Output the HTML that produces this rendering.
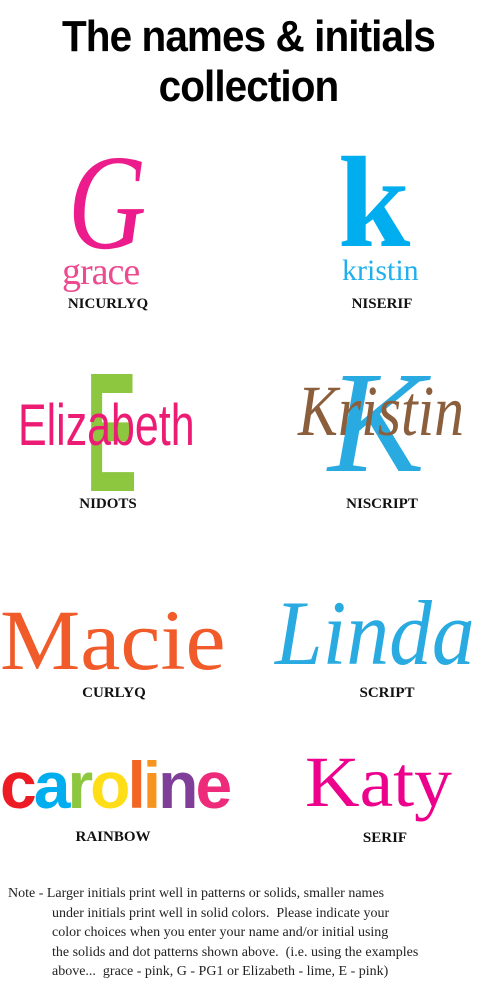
<!DOCTYPE html>
<html><head><meta charset="utf-8"><style>
body{margin:0;width:497px;height:989px;background:#fff;position:relative;overflow:hidden;font-family:"Liberation Serif",serif}
.a{position:absolute;white-space:nowrap;line-height:1}
.lbl{position:absolute;font:bold 15px "Liberation Serif",serif;color:#111;transform:translateX(-50%);white-space:nowrap;line-height:1}
.note{position:absolute;left:8px;top:884px;font:14px/19.5px "Liberation Serif",serif;color:#222;white-space:nowrap}
</style></head><body>
<div class="a" style="left:0;width:497px;text-align:center;top:12px;font:bold 44px 'Liberation Sans',sans-serif;letter-spacing:-1px;transform:scaleX(0.92)">The names &amp; initials</div>
<div class="a" style="left:0;width:497px;text-align:center;top:62px;font:bold 44px 'Liberation Sans',sans-serif;letter-spacing:-1px;transform:scaleX(0.92)">collection</div>

<div class="a" style="left:58px;top:125px;font:italic 136px 'Liberation Serif',serif;color:#ec1c8c;transform:scaleX(0.8)">G</div>
<div class="a" style="left:62px;top:250px;font:38px 'Liberation Serif',serif;color:#ec4b8f;letter-spacing:-1px">grace</div>
<div class="lbl" style="left:108px;top:297px">NICURLYQ</div>

<div class="a" style="left:338px;top:128px;font:bold 130px 'Liberation Serif',serif;color:#00aeef">k</div>
<div class="a" style="left:342px;top:254px;font:30px 'Liberation Serif',serif;color:#1fb0ec">kristin</div>
<div class="lbl" style="left:382px;top:297px">NISERIF</div>

<div class="a" style="left:86px;top:335px;font:bold 170px 'Liberation Sans',sans-serif;color:#8dc63f;transform:scaleX(0.45);transform-origin:left">E</div>
<div class="a" style="left:18px;top:392px;font:58px 'Liberation Sans',sans-serif;color:#ec1c74;transform:scaleX(0.74);transform-origin:left">Elizabeth</div>
<div class="lbl" style="left:108px;top:497px">NIDOTS</div>

<div class="a" style="left:328px;top:340px;font:italic 145px 'Liberation Serif',serif;color:#29abe2">K</div>
<div class="a" style="left:298px;top:370px;font:italic 72px 'Liberation Serif',serif;color:#8b5e3c;transform:scaleX(0.83);transform-origin:left">Kristin</div>
<div class="lbl" style="left:382px;top:497px">NISCRIPT</div>

<div class="a" style="left:0;top:590px;font:86px 'Liberation Serif',serif;color:#f15a29;transform:scaleX(1.05);transform-origin:left">Macie</div>
<div class="lbl" style="left:114px;top:686px">CURLYQ</div>

<div class="a" style="left:275px;top:580px;font:italic 92px 'Liberation Serif',serif;color:#29abe2;transform:scaleX(0.93);transform-origin:left">Linda</div>
<div class="lbl" style="left:387px;top:686px">SCRIPT</div>

<div class="a" style="left:0;top:747px;font:bold 66px 'Liberation Sans',sans-serif;letter-spacing:-3px"><span style="color:#ed1c24">c</span><span style="color:#00aeef">a</span><span style="color:#8dc63f">r</span><span style="color:#ffde17">o</span><span style="color:#f26522">l</span><span style="color:#f7941d">i</span><span style="color:#7f3f98">n</span><span style="color:#ee2a7b">e</span></div>
<div class="lbl" style="left:113px;top:830px">RAINBOW</div>

<div class="a" style="left:305px;top:741px;font:72px 'Liberation Serif',serif;color:#ec008c;transform:scaleX(1.05);transform-origin:left">Katy</div>
<div class="lbl" style="left:385px;top:831px">SERIF</div>

<div class="note">Note - Larger initials print well in patterns or solids, smaller names<br>
<span style="padding-left:44px">under initials print well in solid colors.&nbsp; Please indicate your</span><br>
<span style="padding-left:44px">color choices when you enter your name and/or initial using</span><br>
<span style="padding-left:44px">the solids and dot patterns shown above.&nbsp; (i.e. using the examples</span><br>
<span style="padding-left:44px">above...&nbsp; grace - pink, G - PG1 or Elizabeth - lime, E - pink)</span></div>
</body></html>
